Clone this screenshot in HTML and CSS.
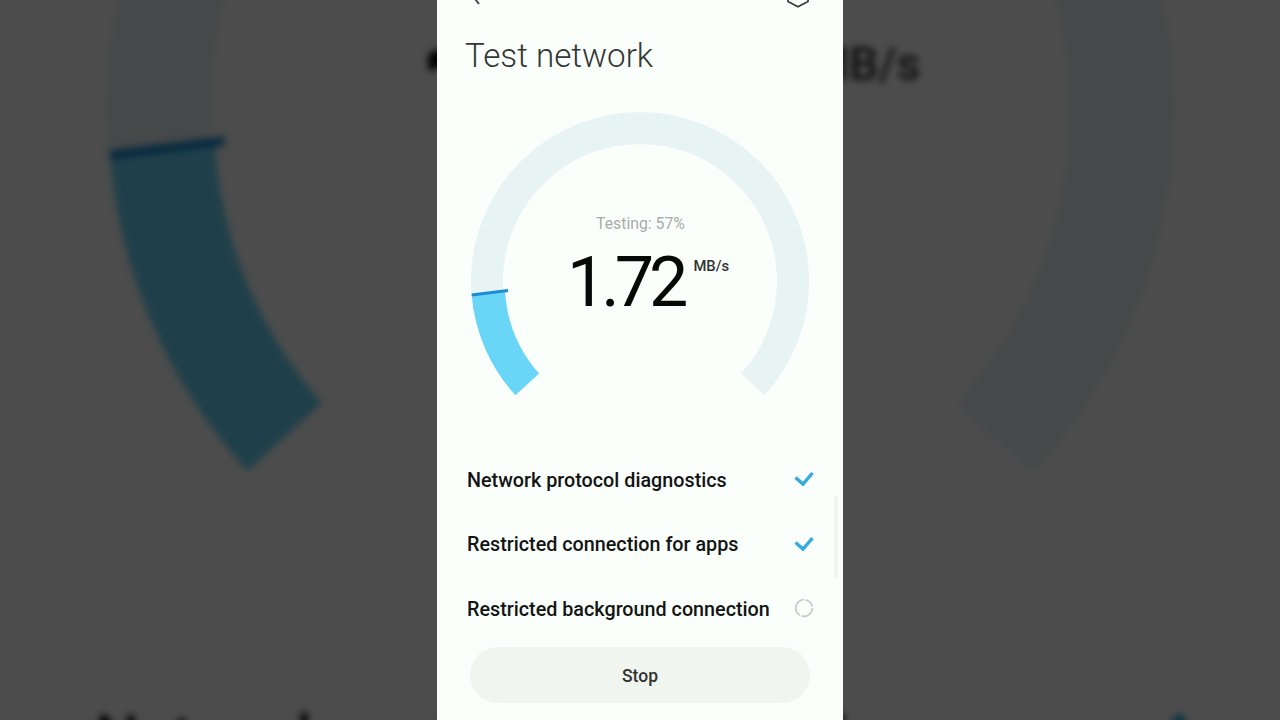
FILE: index.html
```html
<!DOCTYPE html>
<html lang="en">
<head>
<meta charset="utf-8">
<title>Test network</title>
<link rel="stylesheet" href="styles.css">
</head>
<body>
<div class="stage">
  <div class="backdrop" aria-hidden="true">
    <div class="phone ghost">
      <div class="topbar"></div>
      <div class="title-space"></div>
      <div class="gauge">
        <svg class="dial" viewBox="0 0 406 310" width="406" height="310">
          <path class="track" d="M78.4 295.2A169 169 0 1 1 327.6 295.2L304 273.6A137 137 0 1 0 102 273.6Z"/>
          <path class="fill" d="M34.7 195A169 169 0 0 0 78.4 295.2L102 273.6A137 137 0 0 1 68 190.8Z"/>
          <path class="marker" d="M34.7 195L71 190.5"/>
        </svg>
        <div class="readout">
          <div class="status"></div>
          <div class="speed"><span class="value">1.72</span><span class="unit">MB/s</span></div>
        </div>
      </div>
      <div class="rows">
        <div class="row"><span class="row-label">Network protocol diagnostics</span>
          <svg class="check" viewBox="0 0 20 16" width="20" height="16"><path d="M1.5 6.5L9 13L18.5 2"/></svg>
        </div>
      </div>
    </div>
  </div>

  <main class="phone">
    <div class="topbar">
      <svg class="top-icon" viewBox="0 0 14 6" width="14" height="6"><path class="glyph" d="M-2 -5L5 4"/></svg>
      <svg class="top-icon" viewBox="0 0 24 8" width="24" height="8"><path class="glyph" d="M2 -2V1.5L12 6.8L22 1.5V-2"/></svg>
    </div>
    <h1 class="title">Test network</h1>
    <div class="gauge">
      <svg class="dial" viewBox="0 0 406 310" width="406" height="310">
        <path class="track" d="M78.4 295.2A169 169 0 1 1 327.6 295.2L304 273.6A137 137 0 1 0 102 273.6Z"/>
        <path class="fill" d="M34.7 195A169 169 0 0 0 78.4 295.2L102 273.6A137 137 0 0 1 68 190.8Z"/>
        <path class="marker" d="M34.7 195L71 190.5"/>
      </svg>
      <div class="readout">
        <div class="status">Testing: 57%</div>
        <div class="speed"><span class="value">1.72</span><span class="unit">MB/s</span></div>
      </div>
    </div>
    <div class="rows">
      <div class="row"><span class="row-label">Network protocol diagnostics</span>
        <svg class="check" viewBox="0 0 20 16" width="20" height="16"><path d="M1.5 6.5L9 13L18.5 2"/></svg>
      </div>
      <div class="row"><span class="row-label">Restricted connection for apps</span>
        <svg class="check" viewBox="0 0 20 16" width="20" height="16"><path d="M1.5 6.5L9 13L18.5 2"/></svg>
      </div>
      <div class="row"><span class="row-label">Restricted background connection</span>
        <svg class="spinner" viewBox="0 0 20 20" width="20" height="20"><circle cx="10" cy="10" r="8.3" pathLength="100" stroke-dasharray="30 3 42 3 19 3"/></svg>
      </div>
    </div>
    <button class="stop" type="button">Stop</button>
    <div class="scrollbar"></div>
  </main>
</div>
</body>
</html>
```
FILE: styles.css
```css
* { box-sizing: border-box; }
html, body { margin: 0; padding: 0; }
body {
  background: #4d4d4d;
  font-family: Roboto, "Liberation Sans", sans-serif;
  overflow: hidden;
}
.stage {
  position: relative;
  width: 1280px;
  height: 720px;
  overflow: hidden;
  display: flex;
  justify-content: center;
}
.backdrop {
  position: absolute;
  inset: 0;
  display: flex;
  justify-content: center;
  background: #fbfffc;
}
.backdrop::after {
  content: "";
  position: absolute;
  inset: 0;
  background: rgba(0, 0, 0, 0.7);
}
.ghost {
  transform: scale(3.15);
  transform-origin: 50% 50%;
  filter: blur(1.2px);
}
.phone {
  position: relative;
  flex: none;
  width: 406px;
  height: 720px;
  background: #fbfffc;
  display: flex;
  flex-direction: column;
}
.topbar {
  height: 10px;
  padding: 0 33px 0 37px;
  display: flex;
  justify-content: space-between;
  align-items: flex-start;
}
.top-icon { display: block; }
.glyph { fill: none; stroke: #3a3d3c; stroke-width: 1.8; }
.title {
  margin: 26px 0 0;
  padding-left: 28px;
  height: 39px;
  font-size: 33.2px;
  line-height: 40px;
  font-weight: 300;
  color: #333735;
}
.title-space { height: 65px; }
.gauge {
  margin-top: 25px;
  height: 310px;
  display: grid;
}
.dial, .readout { grid-area: 1 / 1; }
.dial { display: block; }
.track { fill: #e8f3f4; }
.fill { fill: #69d6f8; }
.marker { fill: none; stroke: #1b8dd4; stroke-width: 3; }
.readout {
  padding-top: 114px;
  display: flex;
  flex-direction: column;
  align-items: center;
}
.status {
  height: 20px;
  font-size: 15.8px;
  line-height: 20px;
  color: #a9abaa;
  margin-left: 1px;
}
.speed {
  display: flex;
  align-items: flex-start;
  margin-top: 10px;
  margin-left: 16px;
}
.value {
  font-size: 70px;
  line-height: 76px;
  font-weight: 400;
  letter-spacing: -5px;
  color: #070808;
}
.unit {
  margin: 12px 0 0 10px;
  font-size: 14.8px;
  line-height: 20px;
  font-weight: 500;
  color: #333;
}
.rows {
  margin-top: 37px;
  padding: 0 29px 0 30px;
  display: flex;
  flex-direction: column;
}
.row {
  height: 64.5px;
  display: flex;
  align-items: center;
  justify-content: space-between;
  font-size: 19.75px;
  font-weight: 500;
  color: #131514;
}
.row-label { padding-top: 2px; }
.check { fill: none; stroke: #34aadf; stroke-width: 3.4; }
.spinner { fill: none; stroke: #c9cbca; stroke-width: 1.8; }
.stop {
  margin: 6px 0 0 33px;
  padding-top: 3px;
  width: 340px;
  height: 56px;
  border: 0;
  border-radius: 28px;
  background: #f1f5f0;
  font-family: inherit;
  font-size: 17.5px;
  font-weight: 500;
  color: #333;
}
.scrollbar {
  position: absolute;
  left: 397px;
  top: 496px;
  width: 4px;
  height: 81px;
  background: #f1f5f2;
}
```
